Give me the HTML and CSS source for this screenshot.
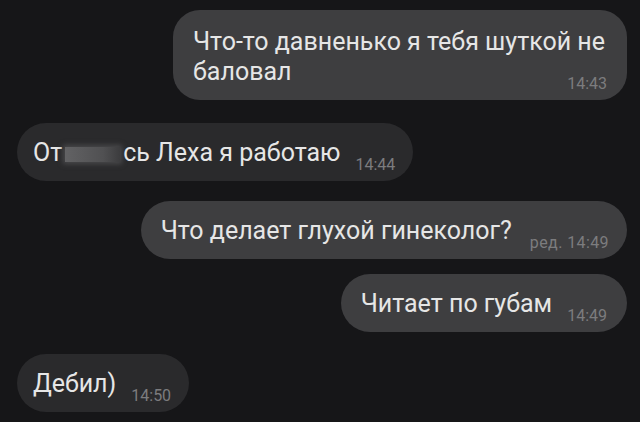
FILE: index.html
```html
<!DOCTYPE html>
<html lang="ru">
<head>
<meta charset="utf-8">
<link rel="stylesheet" href="styles.css">
</head>
<body>
<div class="chat">
  <div class="msg out m1">
    <div class="bubble wide">
      <div class="line">Что-то давненько я тебя шуткой не</div>
      <div class="lastline">
        <span class="text">баловал</span>
        <span class="time">14:43</span>
      </div>
    </div>
  </div>
  <div class="msg in m2">
    <div class="bubble">
      <span class="text">От<span class="blur"></span>сь Леха я работаю</span>
      <span class="time">14:44</span>
    </div>
  </div>
  <div class="msg out m3">
    <div class="bubble">
      <span class="text">Что делает глухой гинеколог?</span>
      <span class="time">ред. 14:49</span>
    </div>
  </div>
  <div class="msg out m4">
    <div class="bubble">
      <span class="text">Читает по губам</span>
      <span class="time">14:49</span>
    </div>
  </div>
  <div class="msg in m5">
    <div class="bubble">
      <span class="text">Дебил)</span>
      <span class="time">14:50</span>
    </div>
  </div>
</div>
</body>
</html>
```
FILE: styles.css
```css
html, body {
  margin: 0;
  padding: 0;
  background: #161618;
}
body {
  width: 640px;
  height: 422px;
  overflow: hidden;
  font-family: Roboto, "Noto Sans", sans-serif;
}
.chat {
  display: flex;
  flex-direction: column;
  padding: 10px 13px 0 17px;
}
.msg {
  display: flex;
}
.msg.out { justify-content: flex-end; }
.msg.in { justify-content: flex-start; }
.m2 { margin-top: 23px; }
.m3 { margin-top: 20px; }
.m4 { margin-top: 15px; }
.m5 { margin-top: 22px; }
.bubble {
  display: flex;
  align-items: flex-end;
  gap: 15px;
  padding: 15px 20px 13px 20px;
  border-radius: 29px;
  color: #e6e6e6;
  font-size: 25px;
  line-height: 30px;
}
.in .bubble {
  background: #2a2a2c;
  padding-left: 16px;
  padding-right: 18px;
}
.out .bubble { background: #3e3e40; }
.m3 .bubble {
  gap: 18px;
  padding-right: 18px;
}
.m3 .time {
  letter-spacing: 0.4px;
}
.bubble.wide {
  flex-direction: column;
  align-items: stretch;
  gap: 0;
  width: 414px;
  padding: 17px 20px 8px 20px;
  border-radius: 27px;
}
.lastline {
  display: flex;
  justify-content: space-between;
  align-items: flex-end;
}
.lastline .text {
  margin-bottom: 5px;
}
.lastline .time {
  margin-bottom: 0;
}
.time {
  font-size: 16px;
  line-height: 16px;
  color: #7c7c7e;
  white-space: nowrap;
  margin-bottom: -5px;
}
.blur {
  display: inline-block;
  width: 55px;
  height: 15px;
  margin: 0 3px -1px 3px;
  background: linear-gradient(90deg, #626264, #505052 70%, #3c3c3e);
  box-shadow: 0 0 5px 2px #4a4a4c;
  vertical-align: 0;
}
```
